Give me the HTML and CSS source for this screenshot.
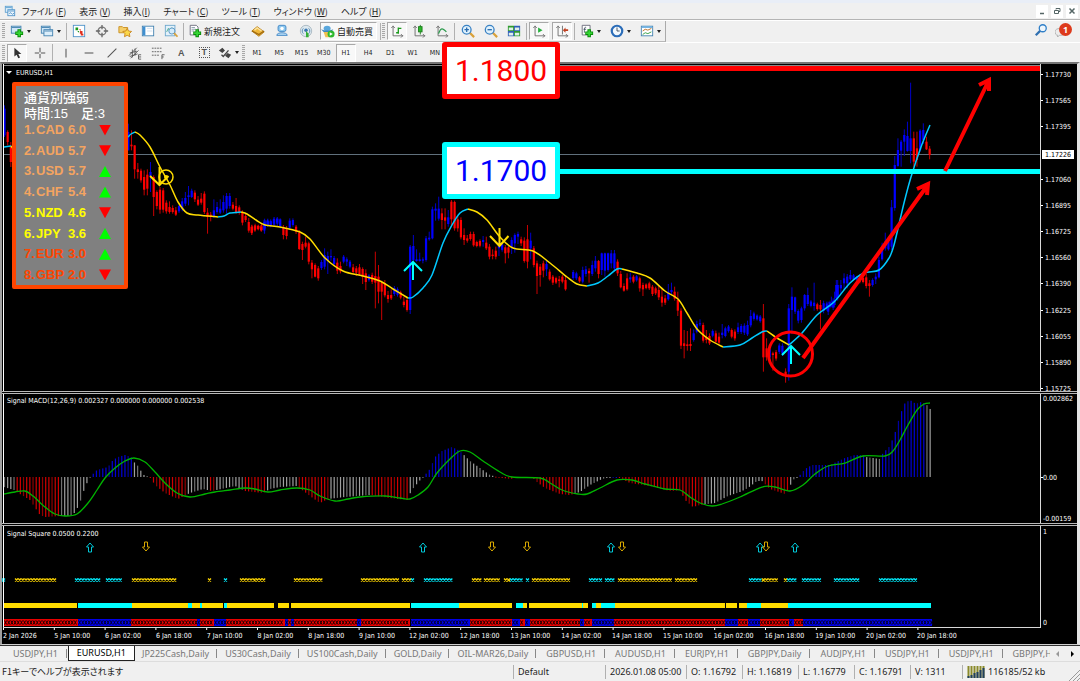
FILE: index.html
```html
<!DOCTYPE html>
<html lang="ja">
<head>
    <meta charset="utf-8">
    <meta name="viewport" content="width=device-width, initial-scale=1">
    <title>EURUSD,H1</title>
    <link rel="stylesheet" href="styles.css">
</head>
<body>
    <nav class="menubar">
        <svg class="app-icon" viewBox="0 0 14 14"><rect x="1.500" y="1.500" width="8" height="7" fill="#dceefa" stroke="#5d9fd0"/><path d="M2 3h7" stroke="#5d9fd0"/><rect x="4.500" y="5.500" width="8" height="7" fill="#eef7fd" stroke="#4a90c8"/><path d="M5 7h7M6 10l2-1 2 2 2-2" stroke="#4a90c8" fill="none"/></svg>
        <button>ファイル (<u>F</u>)</button>
        <button>表示 (<u>V</u>)</button>
        <button>挿入(<u>I</u>)</button>
        <button>チャート (<u>C</u>)</button>
        <button>ツール (<u>T</u>)</button>
        <button>ウィンドウ (<u>W</u>)</button>
        <button>ヘルプ (<u>H</u>)</button>
        <div class="win-buttons">
            <button aria-label="最小化"><svg viewBox="0 0 12 12"><path d="M4 8.500h4" stroke="#566" stroke-width="1.500"/></svg></button>
            <button aria-label="元に戻す"><svg viewBox="0 0 12 12"><path d="M5 4.500V3.500h4v3h-1M3.500 5.500h4v3h-4z" stroke="#566" fill="none"/></svg></button>
            <button aria-label="閉じる"><svg viewBox="0 0 12 12"><path d="M3.500 3.500l5 5M8.500 3.500l-5 5" stroke="#566" stroke-width="1.500"/></svg></button>
        </div>
    </nav>

    <div class="toolbar">
        <div class="strip">
            <i class="grip"></i>
            <div class="group g-window">
                <button aria-label="新規チャート"><svg viewBox="0 0 16 16"><rect x="1.500" y="2.500" width="11" height="8" fill="#cfe6f7" stroke="#3f7fae"/><path d="M2 4h10" stroke="#3f7fae"/><path d="M10.500 6v9M6 10.500h9" stroke="#0a8a0a" stroke-width="4"/><path d="M10.500 7v7M7 10.500h7" stroke="#35d535" stroke-width="2"/></svg><b class="caret"></b></button>
                <button aria-label="プロファイル"><svg viewBox="0 0 16 16"><rect x="1.500" y="2.500" width="10" height="8" fill="#cfe6f7" stroke="#3f7fae"/><rect x="4.500" y="6.500" width="10" height="7" fill="#dceefa" stroke="#3f7fae"/><path d="M2 4h9M5 8h9" stroke="#3f7fae"/></svg><b class="caret"></b></button>
            </div>
            <i class="sep"></i>
            <div class="group g-panels">
                <button aria-label="気配値表示"><svg viewBox="0 0 16 16"><rect x="1.500" y="1.500" width="13" height="13" fill="#fff" stroke="#4a90c8"/><path d="M4 4h3v3H4zM6 8h2v2" fill="#1a9a1a"/><path d="M9 8h3v3H9zM8 6h2v2M10 11h3v2h-3z" fill="#e03020"/></svg></button>
                <button aria-label="データウィンドウ"><svg viewBox="0 0 16 16"><circle cx="8" cy="8" r="4.500" fill="none" stroke="#777" stroke-width="1.500"/><path d="M8 1v5M8 10v5M1 8h5M10 8h5" stroke="#666" stroke-width="1.500"/></svg></button>
                <button aria-label="ナビゲーター"><svg viewBox="0 0 16 16"><path d="M1 3h4l1 1h5v6H1z" fill="#f5cf6a" stroke="#c78b1a"/><path d="M10.500 5l1.500 3 3.500.5-2.500 2.500.6 3.500-3.100-1.600-3.100 1.600.6-3.500L5.500 8.500 9 8z" fill="#fbd84a" stroke="#c7821a"/></svg></button>
                <button aria-label="ターミナル"><svg viewBox="0 0 16 16"><rect x="1.500" y="2.500" width="13" height="11" fill="#fff" stroke="#3f7fae"/><path d="M2 3h3v10H2z" fill="#3f8fd0"/><path d="M7 5h6M7 8h6" stroke="#cde"/></svg></button>
                <button aria-label="ストラテジーテスター"><svg viewBox="0 0 16 16"><rect x="1.500" y="1.500" width="11" height="12" fill="#e4f1fa" stroke="#6aa5cc"/><path d="M3 9l2-4 2 4 2-5" stroke="#4a8" fill="none"/><circle cx="9" cy="8" r="3.500" fill="#d5ecfa" stroke="#4f8fbf"/><path d="M11.500 10.500l4 4" stroke="#d9a13a" stroke-width="2"/></svg></button>
            </div>
            <i class="sep"></i>
            <div class="group g-trade">
                <button class="wide"><svg viewBox="0 0 16 16"><path d="M2.500 1.500h7l2 2v9h-9z" fill="#fff" stroke="#667"/><path d="M4 4h4M4 6h5M4 8h3" stroke="#89a"/><path d="M10.500 6v9M6 10.500h9" stroke="#0a8a0a" stroke-width="4"/><path d="M10.500 7v7M7 10.500h7" stroke="#35d535" stroke-width="2"/></svg>新規注文</button>
                <button aria-label="メタエディター"><svg viewBox="0 0 16 16"><path d="M1 8l6-5 8 6-6 5z" fill="#f0b83a" stroke="#b5790f"/><path d="M1 8l8 4 6-4" stroke="#a06a10" stroke-width="1.500" fill="none"/><path d="M4 7l3-2.500 5 3.500" stroke="#fbe3a0" stroke-width="1.500" fill="none"/></svg></button>
                <button aria-label="コミュニティ"><svg viewBox="0 0 16 16"><rect x="3.500" y="1.500" width="9" height="7" rx="2" fill="#8ec8ef" stroke="#3a82c4"/><circle cx="8" cy="5" r="2" fill="#fff"/><path d="M2 13c0-4 12-4 12 0z" fill="#b5daf5" stroke="#3a82c4"/></svg></button>
                <button aria-label="シグナル"><svg viewBox="0 0 16 16"><circle cx="8" cy="8" r="6.500" fill="#dde8ee" stroke="#a5b5bf"/><path d="M5 5a4 4 0 0 0 0 6M11 5a4 4 0 0 1 0 6" stroke="#4a86b4" fill="none"/><circle cx="8" cy="7" r="2" fill="#3b78b0"/><path d="M8 8v7h3V11z" fill="#35b035"/></svg></button>
                <button class="wide pressed"><svg viewBox="0 0 16 16"><ellipse cx="7" cy="5" rx="4" ry="3" fill="#5aa7dc"/><path d="M0 6c4 2 10 2 14 0l-2 3H3z" fill="#3c86c0"/><path d="M3 9h8l-1 6H5z" fill="#f0c050"/><circle cx="11.500" cy="11.500" r="4" fill="#2eb82e"/><path d="M10 9.500v4l3.500-2z" fill="#fff"/></svg>自動売買</button>
            </div>
            <i class="sep"></i><i class="grip"></i>
            <div class="group g-chart">
                <button class="pressed" aria-label="バーチャート"><svg viewBox="0 0 16 16"><path d="M3.500 2v11.500H15M1.500 4.500l2-2 2 2M12.500 11.500l2 2-2 2" stroke="#666" fill="none"/><path d="M9.500 4v7M7 10h2M10 5h3" stroke="#1a9a1a" stroke-width="1.500"/></svg></button>
                <button aria-label="ローソク足"><svg viewBox="0 0 16 16"><path d="M3.500 2v11.500H15M1.500 4.500l2-2 2 2M12.500 11.500l2 2-2 2" stroke="#666" fill="none"/><path d="M9.500 1v11" stroke="#1a7a1a"/><rect x="7.500" y="3" width="4" height="6" fill="#2db82d" stroke="#1a7a1a"/></svg></button>
                <button aria-label="ラインチャート"><svg viewBox="0 0 16 16"><path d="M3.500 2v11.500H15M1.500 4.500l2-2 2 2M12.500 11.500l2 2-2 2" stroke="#666" fill="none"/><path d="M4 11c3-8 5-6 9-2" stroke="#2c9a4c" fill="none" stroke-width="1.500"/></svg></button>
            </div>
            <i class="sep"></i>
            <div class="group g-zoom">
                <button aria-label="拡大"><svg viewBox="0 0 16 16"><path d="M10 10l5 5" stroke="#d9a13a" stroke-width="2.500"/><circle cx="6.500" cy="6.500" r="5" fill="#dff1fc" stroke="#3a82c4" stroke-width="1.500"/><path d="M4 6.500h5M6.500 4v5" stroke="#2a6cb0" stroke-width="1.500"/></svg></button>
                <button aria-label="縮小"><svg viewBox="0 0 16 16"><path d="M10 10l5 5" stroke="#d9a13a" stroke-width="2.500"/><circle cx="6.500" cy="6.500" r="5" fill="#dff1fc" stroke="#3a82c4" stroke-width="1.500"/><path d="M4 6.500h5" stroke="#2a6cb0" stroke-width="1.500"/></svg></button>
                <button aria-label="ウィンドウの整列"><svg viewBox="0 0 16 16"><path d="M1 2h7v6H1zM8 8h7v6H8z" fill="#2f9a2f"/><path d="M8 2h7v6H8zM1 8h7v6H1z" fill="#2f5fb8"/><path d="M2 4h5v3H2zM9 4h5v3H9zM2 10h5v3H2zM9 10h5v3H9z" fill="#dff0e8"/></svg></button>
            </div>
            <i class="sep"></i>
            <div class="group g-scroll">
                <button class="pressed" aria-label="自動スクロール"><svg viewBox="0 0 16 16"><path d="M3.500 2v11.500H15M1.500 4.500l2-2 2 2M12.500 11.500l2 2-2 2" stroke="#666" fill="none"/><path d="M7 4v6l5-3z" fill="#23b03a"/></svg></button>
                <button class="pressed" aria-label="チャートシフト"><svg viewBox="0 0 16 16"><path d="M3.500 2v11.500H15M1.500 4.500l2-2 2 2M12.500 11.500l2 2-2 2M8.500 2v10" stroke="#666" fill="none"/><path d="M9 7l3-3v2h3v2h-3v2z" fill="#c04020"/></svg></button>
            </div>
            <i class="sep"></i>
            <div class="group g-insert">
                <button aria-label="インディケーター"><svg viewBox="0 0 16 16"><path d="M2.500 1.500h9v11h-9z" fill="#fff" stroke="#667"/><path d="M7 4c-2-1-2 1-2 6M4 6h3" stroke="#456" fill="none"/><path d="M10.500 6v9M6 10.500h9" stroke="#0a8a0a" stroke-width="4"/><path d="M10.500 7v7M7 10.500h7" stroke="#35d535" stroke-width="2"/></svg><b class="caret"></b></button>
                <button aria-label="時間足設定"><svg viewBox="0 0 16 16"><circle cx="8" cy="8" r="6" fill="#f2f8fd" stroke="#2a6cb8" stroke-width="2.500"/><path d="M8 4v4h3" stroke="#345" fill="none"/></svg><b class="caret"></b></button>
                <button aria-label="定型チャート"><svg viewBox="0 0 16 16"><rect x="1.500" y="2.500" width="13" height="11" fill="#fff" stroke="#3f7fae"/><path d="M2 3.500h12" stroke="#6fb0e0" stroke-width="2"/><path d="M3 8l3-2 3 1 4-2" stroke="#b5651a" fill="none"/><path d="M3 12l3-2 3 1 4-2" stroke="#2a9a3a" fill="none"/></svg><b class="caret"></b></button>
            </div>
        </div>
        <div class="right-tools">
            <button aria-label="検索"><svg viewBox="0 0 16 16"><circle cx="10" cy="6" r="4" fill="#eef6fc" stroke="#2f7fc8" stroke-width="1.500"/><path d="M7 9l-5 5" stroke="#2f6fb0" stroke-width="2.500"/></svg></button>
            <button class="mail" aria-label="メッセージ"><svg viewBox="0 0 16 16"><path d="M0 10c0-5 11-5 11 0s-5 4-6 4l-2 2v-2c-2 0-3-2-3-4z" fill="#ececec" stroke="#aaa"/></svg><span class="badge">1</span></button>
        </div>
    </div>

    <div class="toolbar periods">
        <div class="strip plain">
            <i class="grip"></i>
            <div class="group g-cursor">
                <button class="pressed" aria-label="カーソル"><svg viewBox="0 0 16 16"><path d="M5 2v10l2.500-2 2 4 2-1-2-4H13z" fill="#333"/></svg></button>
                <button aria-label="クロスヘア"><svg viewBox="0 0 16 16"><path d="M8 2v5M8 9v5M2 8h5M9 8h5" stroke="#555" stroke-width="1.200"/></svg></button>
            </div>
            <i class="sep"></i>
            <div class="group g-draw">
                <button aria-label="垂直線"><svg viewBox="0 0 16 16"><path d="M8 3v10" stroke="#555" stroke-width="1.200"/></svg></button>
                <button aria-label="水平線"><svg viewBox="0 0 16 16"><path d="M3 8h10" stroke="#555" stroke-width="1.200"/></svg></button>
                <button aria-label="トレンドライン"><svg viewBox="0 0 16 16"><path d="M3 13L13 3" stroke="#555" stroke-width="1.200"/></svg></button>
                <button aria-label="チャネル"><svg viewBox="0 0 16 16"><path d="M1 11l9-9M3 14l9-9M2 8l8-2M2 12l9-3M5 4v9M8 3v8M12 15v-5h3M12 12.500h3M12 15h3" stroke="#555" fill="none"/></svg></button>
                <button aria-label="フィボナッチ"><svg viewBox="0 0 16 16"><path d="M1 2.500h12M1 6.500h12M1 10.500h9" stroke="#555" stroke-dasharray="2 1"/><path d="M12.500 15v-5h3M12.500 12.500h2" stroke="#555" fill="none"/></svg></button>
                <button aria-label="文字" class="letter">A</button>
                <button aria-label="ラベル" class="letter boxed"><span>T</span></button>
                <button aria-label="矢印"><svg viewBox="0 0 16 16"><path d="M1 5l4-3 3 3-3 3zM8 11l3-3 4 2-3 4z" fill="#444"/><path d="M4 10l2 2 6-7" stroke="#444" fill="none" stroke-width="1.500"/></svg><b class="caret"></b></button>
            </div>
            <i class="grip"></i>
            <div class="group g-period">
                <button>M1</button><button>M5</button><button>M15</button><button>M30</button><button class="pressed">H1</button><button>H4</button><button>D1</button><button>W1</button><button>MN</button>
            </div>
        </div>
    </div>

    <main class="chart-window">
        <svg id="price" class="pane pane-price"></svg>
        <svg id="macd" class="pane pane-macd"></svg>
        <svg id="square" class="pane pane-square"></svg>

        <section class="strength">
            <h2>通貨別強弱</h2>
            <p>時間:15　足:3</p>
            <ol>
                <li class="strong"><span>1.</span><span>CAD</span><span>6.0</span><i class="down"></i></li>
                <li class="strong"><span>2.</span><span>AUD</span><span>5.7</span><i class="down"></i></li>
                <li class="strong"><span>3.</span><span>USD</span><span>5.7</span><i class="up"></i></li>
                <li class="strong"><span>4.</span><span>CHF</span><span>5.4</span><i class="up"></i></li>
                <li class="middle"><span>5.</span><span>NZD</span><span>4.6</span><i class="down"></i></li>
                <li class="middle"><span>6.</span><span>JPY</span><span>3.6</span><i class="up"></i></li>
                <li class="weak"><span>7.</span><span>EUR</span><span>3.0</span><i class="up"></i></li>
                <li class="weak"><span>8.</span><span>GBP</span><span>2.0</span><i class="down"></i></li>
            </ol>
        </section>
        <div class="level level-red">1.1800</div>
        <div class="level level-cyan">1.1700</div>
    </main>

    <div class="tabs">
        <div class="tab-list">
            <button>USDJPY,H1</button>
            <button class="active">EURUSD,H1</button>
            <button class="daily">JP225Cash,Daily</button>
            <button class="daily">US30Cash,Daily</button>
            <button class="daily">US100Cash,Daily</button>
            <button class="daily">GOLD,Daily</button>
            <button class="daily">OIL-MAR26,Daily</button>
            <button>GBPUSD,H1</button>
            <button>AUDUSD,H1</button>
            <button>EURJPY,H1</button>
            <button>GBPJPY,Daily</button>
            <button>AUDJPY,H1</button>
            <button>USDJPY,H1</button>
            <button>USDJPY,H1</button>
            <button>GBPJPY,H1</button>
        </div>
        <button class="scroll left" aria-label="前へ"></button>
        <button class="scroll right" aria-label="次へ"></button>
    </div>

    <footer class="status">
        <span class="help">F1キーでヘルプが表示されます</span>
        <span class="profile">Default</span>
        <span class="date">2026.01.08 05:00</span>
        <span class="price">O: 1.16792</span>
        <span class="price">H: 1.16819</span>
        <span class="price">L: 1.16779</span>
        <span class="price">C: 1.16791</span>
        <span class="volume">V: 1311</span>
        <span class="traffic"><svg viewBox="0 0 19 12"><path d="M1.500 0v12M4.500 0v12M7.500 0v12M10.500 0v12M13.500 0v12M16.500 0v12" stroke="#8a8a2a" stroke-width="2"/><path d="M1.500 10v2M4.500 9v3M7.500 7v5M10.500 6v6M13.500 4v8M16.500 2v10" stroke="#1f3f5f" stroke-width="2"/></svg>116185/52 kb</span>
        <svg class="resize" viewBox="0 0 12 12"><path d="M1 12L12 1M5 12l7-7M9 12l3-3" stroke="#999"/></svg>
    </footer>
    <script src="chart.js"></script>
</body>
</html>
```
FILE: styles.css
```css
body {
    margin: 0;
    min-height: 100vh;
    display: flex;
    flex-direction: column;
    background: #f0f0f0;
    color: #222;
    font: 9px "Noto Sans", "Noto Sans CJK JP", sans-serif;
    overflow: hidden;
}

button {
    margin: 0;
    padding: 0;
    border: 1px solid transparent;
    background: none;
    color: inherit;
    font: inherit;
    white-space: nowrap;
}

/* menu */
.menubar {
    display: flex;
    align-items: center;
    gap: 11px;
    height: 16px;
    padding: 3px 2px 0 4px;
    border-bottom: 1px solid #b4b4b4;
    background: linear-gradient(#e9eef7 3px, #f0f0f0 3px);
    font-family: "Noto Sans CJK JP", sans-serif;
    font-feature-settings: "palt";
}

.menubar u {
    text-underline-offset: 1px;
}

.app-icon {
    width: 12px;
    height: 12px;
    margin-right: -6px;
}

.win-buttons {
    display: flex;
    gap: 3px;
    margin-left: auto;
}

.win-buttons button {
    width: 12px;
    height: 13px;
    border: 0;
    background: #fff;
}

.win-buttons svg {
    display: block;
    width: 12px;
    height: 12px;
}

/* toolbars */
.toolbar {
    display: flex;
    justify-content: space-between;
    height: 21px;
    border-top: 1px solid #fff;
}

.toolbar.periods {
    height: 19px;
}

.strip {
    display: flex;
    align-items: center;
    box-sizing: border-box;
    height: 21px;
    padding-left: 2px;
    border-right: 1px solid #aaa;
    border-bottom: 1px solid #b8b8b8;
}

.strip.plain {
    height: 19px;
    border: 0;
}

.grip {
    width: 3px;
    height: 16px;
    margin-right: 1px;
    background: repeating-linear-gradient(#a8a8a8 0, #a8a8a8 1px, #eee 1px, #eee 2px);
}

.sep {
    width: 1px;
    height: 17px;
    margin: 0 1px;
    background: #b0b0b0;
}

.group {
    display: flex;
    align-items: center;
    justify-content: space-around;
}

.group button {
    display: flex;
    align-items: center;
    justify-content: center;
    box-sizing: border-box;
    min-width: 20px;
    height: 18px;
}

.group svg,
.right-tools svg {
    width: 14px;
    height: 14px;
    flex: none;
}

.group .wide {
    gap: 2px;
    font-family: "Noto Sans CJK JP", sans-serif;
    padding-right: 3px;
}

.pressed {
    border-color: #a8a8a8 #fff #fff #a8a8a8;
    background: #f8f8f8;
}

.caret {
    margin-left: 3px;
    border: 2px solid transparent;
    border-top: 3px solid #222;
    border-bottom: 0;
}

.g-window { width: 59px; }
.g-panels { width: 114px; }
.g-trade { width: 194px; }
.g-chart { width: 67px; }
.g-zoom { width: 69px; }
.g-scroll { width: 45px; }
.g-insert { width: 89px; }
.g-cursor { width: 45px; }
.g-draw { width: 188px; }
.g-period { width: 200px; }

.g-period button {
    width: 20px;
    font: 7px "DejaVu Sans Condensed", "DejaVu Sans", sans-serif;
}

.group .letter {
    font: bold 9px "Liberation Sans", sans-serif;
    color: #555;
}

.boxed span {
    padding: 0 2px;
    border: 1px dotted #555;
    line-height: 9px;
}

.right-tools {
    display: flex;
    gap: 5px;
    padding-right: 10px;
}

.mail {
    position: relative;
}

.badge {
    position: absolute;
    right: -3px;
    top: 1px;
    width: 13px;
    height: 13px;
    border-radius: 50%;
    background: #dd3a1c;
    color: #fff;
    font-weight: bold;
    line-height: 13px;
}

/* charts */
.chart-window {
    position: relative;
    border: 1px solid #8a8a8a;
    border-width: 2px 3px 1px 2px;
    border-color: #747474 #e4e4e4 #d0d0d0 #a0a0a0;
    background: #000;
}

.pane {
    display: block;
    width: 100%;
    border-bottom: 3px double #b8b8b8;
    font: 7px "DejaVu Sans Condensed", "DejaVu Sans", sans-serif;
}

.pane text {
    fill: #fff;
}

.pane .tag {
    fill: #000;
}

.pane-price { height: 327px; }
.pane-macd { height: 129px; }
.pane-square {
    height: 118px;
    border: 0;
}

.strength {
    position: absolute;
    left: 10px;
    top: 18px;
    box-sizing: border-box;
    width: 116px;
    height: 207px;
    padding: 4px 8px;
    border: 4px solid #ff4500;
    border-radius: 2px;
    background: #808080;
    color: #fff;
    font-family: "Liberation Sans", "Noto Sans CJK JP", sans-serif;
}

.strength h2,
.strength p {
    margin: 0;
    font-size: 13px;
    font-weight: 500;
    line-height: 16px;
    white-space: nowrap;
}

.strength ol {
    display: flex;
    flex-direction: column;
    justify-content: space-between;
    height: 161px;
    margin: 0;
    padding: 0;
    list-style: none;
}

.strength li {
    display: grid;
    grid-template-columns: 12px 32px 31px 12px;
    align-items: center;
    font-size: 13px;
    font-weight: bold;
    line-height: 16px;
}

.strong { color: #f4a460; }
.middle { color: #ffff00; }
.weak { color: #ff4500; }

.up,
.down {
    width: 12px;
    height: 11px;
    background: #00ff00;
    clip-path: polygon(50% 0, 100% 100%, 0 100%);
}

.down {
    background: #ff0000;
    clip-path: polygon(0 0, 100% 0, 50% 100%);
}

.level {
    position: absolute;
    left: 440px;
    box-sizing: border-box;
    width: 118px;
    height: 57px;
    border: 5px solid;
    border-radius: 3px;
    background: #fff;
    font: 30px/48px Roboto, "Liberation Sans", sans-serif;
    text-align: center;
}

.level-red {
    top: -22px;
    border-color: #ff0000;
    color: #ff0000;
}

.level-cyan {
    top: 78px;
    border-color: #00ffff;
    color: #0000ff;
}

/* chart tabs */
.tabs {
    display: flex;
    align-items: center;
    height: 15px;
    padding-left: 4px;
    border-top: 1px solid #333;
    color: #777;
}

.tab-list {
    display: flex;
    flex: 1;
    min-width: 0;
    overflow: hidden;
}

.tab-list button {
    flex: none;
    height: 15px;
    padding: 0 9px;
    border-width: 0 1px 0 0;
    background: linear-gradient(#888, #888) right center / 1px 9px no-repeat;
    line-height: 14px;
}

.tab-list .daily {
    padding: 0 8px 0 7px;
}

.tab-list .active {
    padding: 0 8px;
    border: 1px solid #222;
    border-top: 0;
    background: #fff;
    color: #000;
}

.scroll {
    width: 15px;
    height: 13px;
    padding-left: 5px;
}

.scroll::before {
    content: "";
    display: block;
    width: 0;
    border: 3px solid transparent;
    border-right: 0;
    border-left: 3px solid #000;
}

.scroll.left::before {
    border-left: 0;
    border-right: 3px solid #999;
}

/* status bar */
.status {
    display: flex;
    align-items: center;
    flex: 1;
    border-top: 1px solid #ddd;
    line-height: 14px;
}

.status span {
    box-sizing: border-box;
    padding-left: 4px;
    border-left: 1px solid #b0b0b0;
    white-space: nowrap;
}

.status .help {
    flex: 1;
    padding-left: 2px;
    border: 0;
    font-family: "Noto Sans CJK JP", sans-serif;
    font-feature-settings: "palt";
}

.status .profile { width: 92px; }
.status .date { width: 81px; }
.status .price { width: 56px; }
.status .volume { width: 52px; }

.status .traffic {
    display: flex;
    align-items: center;
    gap: 2px;
    width: 106px;
}

.traffic svg {
    width: 19px;
    height: 12px;
}

.resize {
    width: 12px;
    height: 12px;
    align-self: flex-end;
}
```
FILE: chart.js
```js
var STEP = 3.17;
var BLUE = '#0000ff', RED = '#ff0000', CYAN = '#00ffff', GOLD = '#ffdc00', SKY = '#00c8ff';

// colour + high,low[,body top,body bottom], in thirds of a pixel below y
var candles = [
    {x: 4.5, y: 62, bars: 'b130,225,140,220 r205,250,210,240 r240,315,255,300'},
    {x: 128.3, y: 62, bars:
        'b185,265,210,265 r205,265,248,253 r250,350,250,322 r303,350,322,330 r320,362,326,355 r325,400,345,383 r322,400,338,380 b300,390,330,342 ' +
        'r340,462,345,405 r385,442,390,432 r375,455,383,443 r378,452,385,443 r415,455,422,448 r418,455,435,450 r430,455,438,450 r435,462,445,458 ' +
        'b428,453,432,448 b408,448,418,440 b390,432,408,425 b372,430,400,405 b380,408,386,405 r385,420,392,412 r402,432,413,428 r393,428,410,422 r388,456,395,450 ' +
        'r438,515,452,465 r450,478,458,464 b412,468,445,462 b420,455,435,450 b412,456,440,452 b400,452,420,445 b393,455,402,440 b393,440,402,432 r420,445,428,440 ' +
        'r408,455,432,450 r430,458,436,452 r445,490,450,482 r455,480,462,474 r468,512,480,506 r488,518,493,510 r485,508,490,502 r488,505,492,500 r485,508,490,504 b470,515,475,500 b470,495,478,490 b476,492,480,488 b465,495,472,488 b465,492,470,485'},
    {x: 251.7, y: 180, bars:
        'r135,165 r135,155 r135,150 r138,155 b118,160 b118,135 b118,142 b113,135 b113,130 b115,145,118,138 r135,178,142,165 r138,178,148,168 b115,150 b115,140 r135,162,140,155 ' +
        'r150,210,158,207 r185,240,192,210 r170,205,188,200 r185,253,190,245 r240,295,248,268 r250,292,255,290 r258,302,265,295 b240,270 b205,268,225,260 b215,282,228,240 b208,242,228,232 ' +
        'b228,258 r235,282,248,272 r245,280,258,274 b225,250 b232,258,238,245 b240,265 r252,282,262,276 r258,288,265,278 r252,288,262,283 r262,312,267,290 r268,330,280,306 ' +
        'b282,305 r278,312 r215,385,288,308 r255,370,290,335 r302,420,308,335 r300,352,310,346 r333,368,345,357 r328,360,345,355 b318,348 b322,350 r332,358 r350,382,365,375 ' +
        'r350,395,360,390 b195,402,200,390 b165,245,198,240 b208,245,238,243 b218,245,238,243 b232,250,238,242 b168,245,175,240 b155,182,173,178 b80,178,88,175 b70,122,86,92 ' +
        'b50,122,86,116 r85,148,100,120 r85,148,112,122 b90,140,112,132 r60,138,65,118 r62,152,66,145 r108,155,118,145 r112,178,120,172 r145,195,165,180 r165,188,175,182 ' +
        'r155,182,162,177 r155,200,162,196 r182,202 r178,202 b168,200,180,186 r170,210,188,205 r192,238,200,230 r208,238,224,228 r200,238,212,230 b185,228,195,205 b188,215 r195,250,202,220 ' +
        'r198,235,202,218 b172,222,180,200 b160,218,165,190 b155,192,162,170 r170,198,178,190 r172,248,182,243 r135,265,178,245 b158,238,182,205 r198,262,205,255 r242,342,250,288 r252,320,260,285 r242,292,250,272 b242,288,252,268 r268,302,275,298 ' +
        'r285,315,290,308 r290,312 r288,322,298,303 r285,310 r288,332,300,328'},
    {x: 573.2, y: 200, bars:
        'b210,240 b215,240 r228,248 b200,250,210,245 b198,230,208,222 r205,248,213,220 b182,228,195,222 b168,215,182,205 r180,235,183,222 b158,225,160,210 b158,230,160,212 b158,215,160,210 ' +
        'b150,205,160,190 b150,212,160,205 r178,228,185,220 r213,265,222,262 r250,275,258,272 r220,272,235,268 b218,248,232,238 r225,250 b225,245 r230,275,235,265 r248,288,255,268 r250,268 r245,270 ' +
        'r255,288,260,282 r260,285 r255,300,270,292 r268,320,290,308 r285,315,295,308 b252,302,275,298 b248,282,270,276 r260,302,275,296 r275,348,300,332 r325,447,332,437 r390,475,430,438 r393,452,433,438 ' +
        'r385,453,432,438 b388,425,400,420 b362,400,372,395 b358,378,370,373 r368,428,375,422 r390,430,412,420 r400,435,408,430 b388,412 r392,430,400,425 r398,432,410,428 b372,415,398,405 b380,412,385,408 b375,398 ' +
        'r385,415,390,410 r388,422 b368,402,382,396 b372,402 b370,405 b362,408,375,403 b330,382,348,376 b335,362 b343,362 b345,368 r312,515,355,472 r415,482,445,472 b440,480 r455,512,460,465 r450,482 b430,462 b430,468 r505,548,515,525 ' +
        'b312,542,325,515 b262,402,290,330 b290,342,292,335 b328,370,333,362 b320,368,325,360 b282,332,285,325 b263,318,285,312 b300,322 b248,332,308,318 r308,332 r300,388,315,328 b302,340 b305,332 b302,325 b295,330 b240,300,255,295'},
    {x: 828.2, y: 70, bars:
        'b695,735,705,725 b680,712,700,706 b665,712,690,705 b630,692,645,682 b630,670,645,655 b610,660,625,640 b612,655,620,640 b600,632,615,628 b612,632 b618,632 r612,640 r620,640 r612,655,622,648 r630,680,640,648 b625,650 b610,642,620,628 b560,625,570,622 b518,572,535,568 ' +
        'b488,542,515,535 b508,542,515,538 b390,540,412,530 b258,422,285,414 b205,290,240,288 b210,290,215,242 b178,258,195,215 b155,245,198,243 b38,280,205,243 r185,290,205,275 r185,290,235,270 b178,245,182,240 b160,222,180,210 r200,240,215,238 r228,268,236,255'}
];

var average = [
    [SKY, '4,147 11,146'], [GOLD, '11,146 14,150'],
    [SKY, '128,137 131,134 135,132'],
    [GOLD, '135,132 140,135 150,147 160,167 170,185 178,202 187,213 198,215 218,217'],
    [SKY, '218,217 224,216 230,213 241,212'],
    [GOLD, '241,212 247,214 256,220 265,225 280,227 300,232 310,239 325,258 343,271 363,276 380,281 393,289 408,298'],
    [SKY, '408,298 413,297 423,288 432,275 443,243 452,225 460,213 468,209'],
    [GOLD, '468,209 477,212 487,220 500,237 513,248 533,251 550,263 567,277 577,284 587,286'],
    [SKY, '587,286 598,283 608,276 617,269 622,269'],
    [GOLD, '622,269 637,273 650,278 665,291 678,299 687,313 697,329 710,340 723,347'],
    [SKY, '723,347 740,345 752,338 762,332 767,331'],
    [GOLD, '767,331 777,338 789,345'],
    [SKY, '789,345 802,333 817,315 834,302 850,283 864,273 879,270 889,258 894,245 904,203 911,177 921,147 930,125']
];

var prices = [['1.17730', 75], ['1.17565', 101], ['1.17395', 127], ['1.17060', 180], ['1.16895', 206], ['1.16725', 232],
    ['1.16560', 258], ['1.16390', 284], ['1.16225', 311], ['1.16055', 337], ['1.15890', 363], ['1.15725', 389]];

var histogram = '4,487 14,490 20,494 30,500 40,515 45,517 60,516 70,516 73,515 78,507 82,497 84,490 87,483 90,477 93,474 97,470 108,467 113,460 118,457 125,455 131,457 134,462 138,466 141,471 144,475 150,477 155,485 165,493 178,499 190,493 203,489 212,491 235,486 245,491 263,493 270,489 280,487 297,486 310,496 320,503 328,499 345,497 370,495 390,498 408,500 411,491 416,485 421,479 425,475 430,469 435,457 442,451 452,447 458,450 462,453 470,461 480,468 490,475 497,477 503,478 510,479 520,477 533,478 537,482 545,488 560,494 570,495 580,492 590,485 600,480 608,477 618,477 630,483 650,486 670,491 680,490 685,500 693,507 700,505 715,503 728,496 740,492 748,488 757,481 762,481 770,489 785,494 788,490 793,480 797,477 800,475 805,469 812,465 830,465 845,458 855,455 863,455 866,457 880,459 883,453 890,446 896,430 900,415 905,403 910,400 916,404 920,402 926,404 931,410';
// colour changes along the histogram
var histColors = [[15, 'g'], [61, 'r'], [91, 'g'], [134, 'b'], [150, 'g'], [187, 'r'], [209, 'g'], [216, 'r'], [243, 'g'], [267, 'r'], [298, 'g'], [329, 'r'],
    [371, 'g'], [410, 'r'], [425, 'g'], [461, 'b'], [495, 'g'], [575, 'r'], [611, 'g'], [619, 'b'], [705, 'r'], [765, 'g'], [788, 'r'], [797, 'g'], [864, 'b'], [880, 'g'], [926, 'b'], [999, 'g']];
var shades = {r: ['#d00000', '#900000'], b: ['#0000d8', '#0000a0'], g: ['#a0a0a0', '#707070']};

var signalLine = '4,494 15,492 25,491 33,496 45,507 55,514 65,516 77,514 88,503 97,490 105,478 115,468 125,461 134,458 145,462 155,472 165,483 177,493 190,497 205,494 215,492 230,490 245,488 255,489 268,492 280,490 297,488 310,490 320,496 335,501 348,499 360,497 385,496 400,498 410,499 418,495 428,487 437,473 450,459 460,451 470,452 483,461 500,472 512,477 540,478 550,483 562,490 578,494 587,494 600,488 617,480 632,480 645,484 665,489 680,490 690,497 700,503 712,506 722,504 740,497 762,487 775,487 790,491 803,485 815,474 828,466 845,463 863,456 885,456 893,451 900,440 908,425 917,410 924,404 930,403';

var ups = [90, 423, 611, 760, 795];
var downs = [146, 492, 527, 622, 766];
var crosses = 'c2-5 y15-56 c75-101 c106-120 y132-177 y208-212 c224-228 y240-266 y294-323 y361-400 y402-410 c411-415 c424-453 y472-482 y484-498 y504-510 c510-523 c526-530 y532-571 c589-597 c599-603 c605-615 y618-670 y675-698 c749-762 y762-778 y784-788 c787-797 c802-819 c834-860 c879-918';
var band = 'y4-77 c78-132 y132-188 c188-192 y192-200 c200-202 y202-223 c224-227 y227-274 y278-289 y291-410 c411-459 y459-512 c516-523 y523-527 y529-582 c582-583 y583-588 c592-596 y596-601 c601-615 y615-725 y726-737 y739-747 c747-761 y761-788 c788-931';
var boxes = 'r4-78 b78-131 r131-197 b197-200 r200-214 b214-226 r226-285 b285-288 r288-291 b291-294 r294-357 b357-361 r361-410 b411-470 r470-512 b512-520 r520-525 b525-530 r530-580 b580-584 r584-592 b592-614 r614-725 b725-738 r738-748 b748-760 r760-789 b789-794 r794-803 b803-932';
var times = ['2 Jan 2026', '5 Jan 10:00', '6 Jan 02:00', '6 Jan 18:00', '7 Jan 10:00', '8 Jan 02:00', '8 Jan 18:00', '9 Jan 10:00', '12 Jan 02:00', '12 Jan 18:00',
    '13 Jan 10:00', '14 Jan 02:00', '14 Jan 18:00', '15 Jan 10:00', '16 Jan 02:00', '16 Jan 18:00', '19 Jan 10:00', '20 Jan 02:00', '20 Jan 18:00'];

function rect(x, y, w, h, fill) {
    return '<rect x="' + x + '" y="' + y + '" width="' + w + '" height="' + h + '" fill="' + fill + '"/>';
}
function path(d, stroke, width) {
    return '<path d="' + d + '" fill="none" stroke="' + stroke + '" stroke-width="' + (width || 1) + '"/>';
}
function text(x, y, s, cls) {
    return '<text x="' + x + '" y="' + y + '" class="' + (cls || '') + '">' + s + '</text>';
}
function toPoints(s) {
    return s.split(' ').map(function (p) { return p.split(',').map(Number); });
}
function curve(s) {
    var p = toPoints(s), d = 'M' + p[0];
    for (var i = 0; i < p.length - 1; i++) {
        var a = p[i - 1] || p[i], b = p[i], c = p[i + 1], e = p[i + 2] || c;
        d += 'C' + [b[0] + (c[0] - a[0]) / 6, b[1] + (c[1] - a[1]) / 6, c[0] - (e[0] - b[0]) / 6, c[1] - (e[1] - b[1]) / 6, c[0], c[1]];
    }
    return d;
}
function spans(s, fn) {
    s.split(' ').forEach(function (item) {
        var ends = item.slice(1).split('-').map(Number);
        fn(item[0], ends[0], ends[1]);
    });
}
// the frame and the scale stay on the right edge of the window
function draw(id, top, bottom, plot, scale) {
    var svg = document.getElementById(id);
    svg.innerHTML = '<g transform="translate(-2,' + -top + ')">' + plot + path('M3.5 ' + bottom + 'V' + top, '#fff') + '</g>' +
        '<svg x="100%" overflow="visible"><g transform="translate(-1077,' + -top + ')">' + path('M1040.500 ' + top + 'V' + bottom, '#d8d8d8') + scale + '</g></svg>';
}

function drawPrice() {
    var s = path('M3 65.500H1041', '#888') + path('M3 154.500H1041', '#60707c'), axis = rect(1041, 62, 40, 330, '#000');
    candles.forEach(function (group) {
        group.bars.split(' ').forEach(function (bar, i) {
            var v = bar.slice(1).split(',').map(Number);
            var pad = (v[1] - v[0]) / 5;
            var open = v.length > 2 ? v[2] : v[0] + pad, close = v.length > 2 ? v[3] : v[1] - pad;
            var x = group.x + i * STEP, color = bar[0] == 'b' ? BLUE : RED;
            s += rect(x - 0.5, group.y + v[0] / 3, 1, (v[1] - v[0]) / 3, bar[0] == 'b' ? '#0000c8' : '#c80000');
            s += rect(x - 1.1, group.y + open / 3, 2.2, Math.max(1, (close - open) / 3), color);
        });
    });
    average.forEach(function (a) { s += path(curve(a[1]), a[0], 1.5); });

    s += path('M413 280V262M404 271l9-9 9 9M791 364V346M782 355l9-9 9 9', CYAN, 2);
    s += path('M159.500 167V184M150 176l9.500 9 9-9M499.500 228V245M490 236l9.500 10 9-10', GOLD, 2);
    s += '<circle cx="166" cy="177" r="7" fill="none" stroke="#ffdc00" stroke-width="1.500"/><circle cx="166" cy="177" r="2" fill="#ffdc00"/>';
    s += '<circle cx="790.500" cy="354" r="22" fill="none" stroke="#f00" stroke-width="3"/>';
    s += path('M559 171.500H1040', CYAN, 5) + path('M559 68.500H1040', RED, 5);
    s += path('M803 358L927 186M917 189l11-5-1 11M945 171L988 82M979 85l10-5v11', RED, 4);
    s += '<path d="M6 71h6l-3 3z" fill="#fff"/>' + text(16, 75, 'EURUSD,H1');

    prices.forEach(function (p) { axis += path('M1041 ' + (p[1] - 0.5) + 'h2', '#fff') + text(1045, p[1] + 2, p[0]); });
    axis += rect(1042, 150, 32, 9, '#fff') + text(1045, 157, '1.17226', 'tag');
    draw('price', 64, 391, s, axis);
}

function drawMacd() {
    var s = '', env = toPoints(histogram), n = 0;
    for (var x = 4.5; x < 931; x += STEP) {
        for (var k = 0; k < env.length - 2 && env[k + 1][0] < x; k++);
        var a = env[k], b = env[k + 1];
        var y = a[1] + (b[1] - a[1]) * (x - a[0]) / (b[0] - a[0]);
        var kind = histColors.filter(function (c) { return x < c[0]; })[0][1];
        s += rect(x - 0.6, Math.min(y, 477), 1.2, Math.max(1, Math.abs(y - 477)), shades[kind][n++ % 3 ? 0 : 1]);
    }
    s += path(curve(signalLine), '#00b400', 1.3) + text(7, 403, 'Signal MACD(12,26,9) 0.002327 0.000000 0.000000 0.002538');
    draw('macd', 394, 523, s, text(1043, 401, '0.002862') + path('M1041 477.500h2', '#fff') + text(1043, 480, '0.00') + text(1043, 521, '-0.00159'));
}

function drawSquare() {
    var s = text(7, 536, 'Signal Square 0.0500 0.2200');
    ups.forEach(function (x) { s += path('M' + x + ' 543l3.500 4h-2v5h-3v-5h-2z', '#00c8d8'); });
    downs.forEach(function (x) { s += path('M' + x + ' 551l3.500-4h-2v-5h-3v5h-2z', '#d8a800'); });
    spans(crosses, function (c, from, to) {
        for (var x = from; x < to - 1; x += STEP) s += path('M' + x + ' 578.500l3 3m0-3l-3 3', c == 'c' ? '#00e8f8' : '#f8d000', 1.3);
    });
    spans(band, function (c, from, to) { s += rect(from, 603, to - from, 5, c == 'c' ? CYAN : '#ffdc00'); });
    spans(boxes, function (c, from, to) {
        s += rect(from, 619, to - from, 7, c == 'b' ? '#0000e8' : '#e80000');
        for (var x = from; x < to - 2; x += STEP) s += path('M' + (x + 0.5) + ' 620.500l2.200 4m0-4l-2.200 4', c == 'b' ? '#000030' : '#200000');
    });
    s += rect(3, 627, 1038, 1, '#d8d8d8');
    times.forEach(function (t, i) {
        var x = 3.500 + i * 50.8;
        s += path('M' + x + ' 628v2', '#fff') + text(i ? x + (i < 8 ? 0 : -1) : 3, 638, t);
    });
    draw('square', 526, 627, s, text(1043, 534, '1') + text(1043, 625, '0'));
}

drawPrice();
drawMacd();
drawSquare();
```
